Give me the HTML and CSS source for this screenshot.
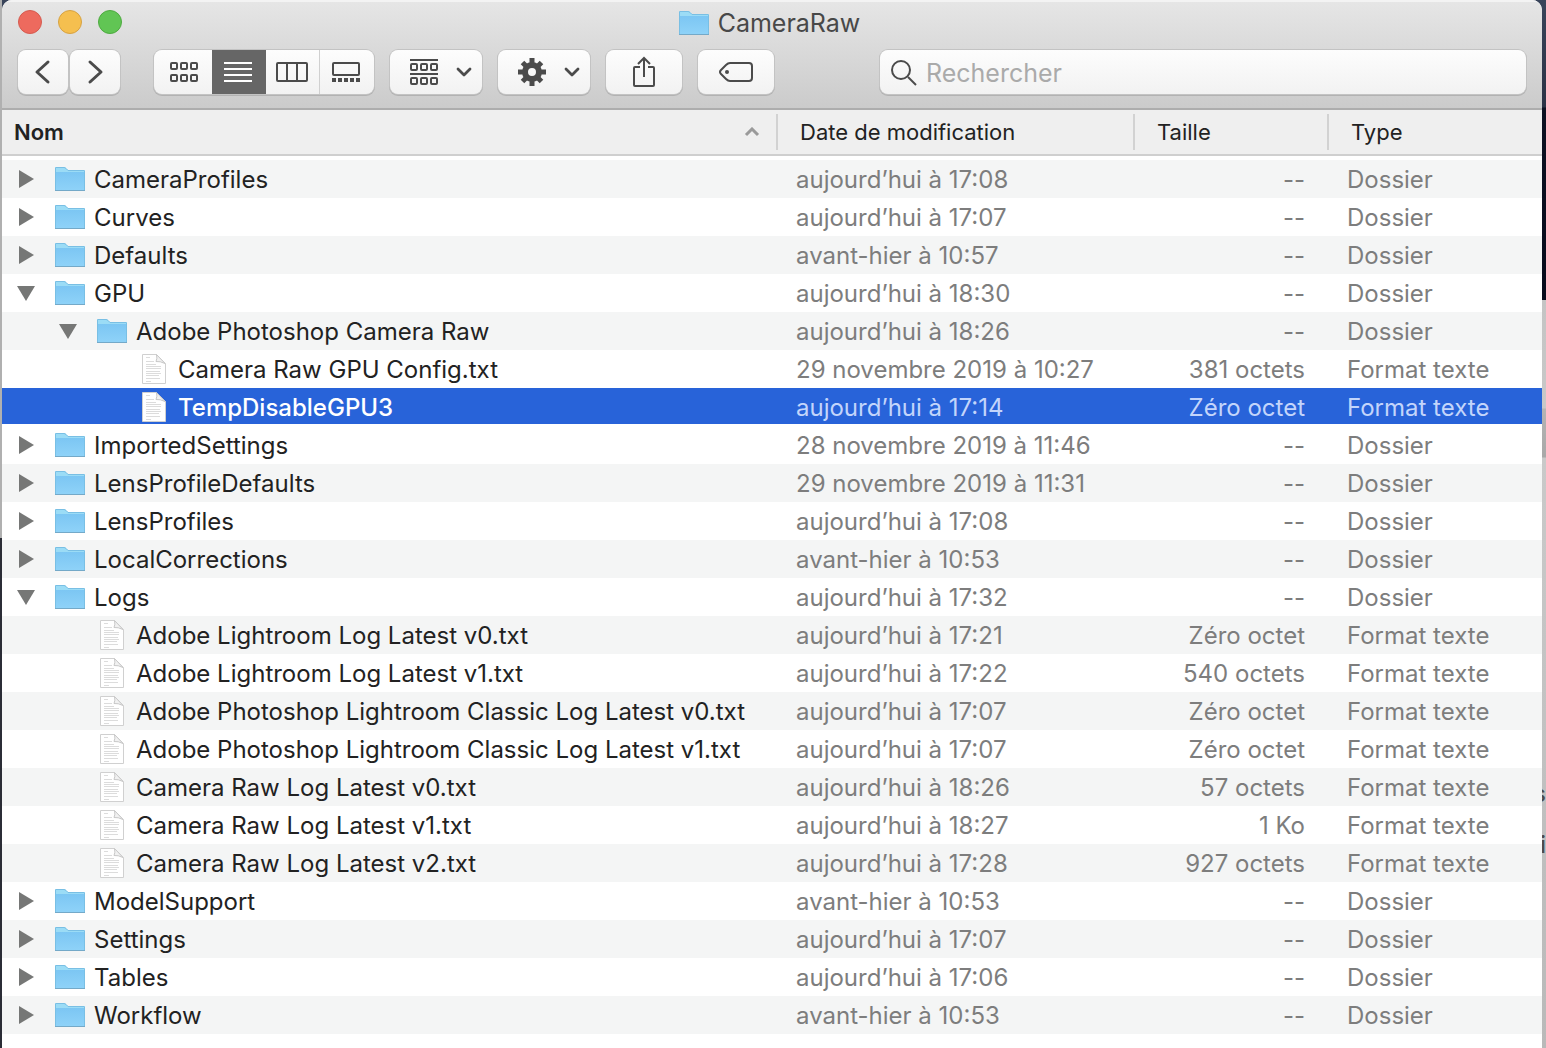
FILE: index.html
```html
<!DOCTYPE html>
<html lang="fr">
<head>
<meta charset="utf-8">
<title>CameraRaw</title>
<link rel="stylesheet" href="styles.css">
</head>
<body>
<svg class="sprite" aria-hidden="true">
  <defs>
    <linearGradient id="fill" x1="0" y1="0" x2="0" y2="1"><stop offset="0" stop-color="#7cc6f3"/><stop offset="1" stop-color="#8ed2f8"/></linearGradient>
    <symbol id="folder" viewBox="0 0 32 26">
      <path d="M1 24V2q0-1 1-1h8q1 0 2 1l2 2h16q1 0 1 1v19z" fill="#9bdcf6"/>
      <path d="M1 6h30v17q0 1-1 1H2q-1 0-1-1z" fill="url(#fill)"/>
      <path d="M1.500 24V2q0-.5.5-.5h8q1 0 2 1l2 2h16q.5 0 .5.500V24" fill="none" stroke="#79bfe4"/>
      <path d="M1 24.500h30" stroke="#74a9c8"/>
    </symbol>
    <symbol id="doc" viewBox="0 0 32 32">
      <path d="M4.500 1.500h14l9 9v20h-23z" fill="#fff" stroke="#d0d0d0"/>
      <path d="M18.500 1.500q1 4-.5 7 4-.5 9 2z" fill="#f1f1f1" stroke="#c8c8c8"/>
      <path d="M8 4.500h4M8 8.500h8M8 11.500h10M8 13.500h15M8 15.500h15M8 18.500h14M8 20.500h15M8 22.500h13M8 25.500h14M8 28.500h5" stroke="#dcdcdc"/>
    </symbol>
    <symbol id="tri" viewBox="0 0 20 20"><path d="M3 1v18l15-9z" fill="#767776"/></symbol>
    <symbol id="tri-open" viewBox="0 0 20 20"><path d="M1 3h18l-9 15z" fill="#767776"/></symbol>
    <symbol id="chev" viewBox="0 0 16 10"><path d="M2 2l6 6 6-6" fill="none" stroke="#4b4b4b" stroke-width="2.800" stroke-linecap="round" stroke-linejoin="round"/></symbol>
  </defs>
</svg>
<div class="behind" aria-hidden="true"><span class="peek peek-s">s</span><span class="peek peek-i">i</span></div>
<main class="window">
  <header class="chrome">
    <div class="titlebar">
      <div class="lights">
        <button class="light close" aria-label="Fermer"></button>
        <button class="light minimize" aria-label="Réduire"></button>
        <button class="light maximize" aria-label="Agrandir"></button>
      </div>
      <h1 class="title"><svg class="title-icon"><use href="#folder"/></svg>CameraRaw</h1>
    </div>
    <div class="toolbar">
      <div class="nav">
        <button class="btn" aria-label="Précédent"><svg width="50" height="44"><path d="M30 12 19 22 30 32" class="arrow"/></svg></button>
        <button class="btn" aria-label="Suivant"><svg width="50" height="44"><path d="M20 12 31 22 20 32" class="arrow"/></svg></button>
      </div>
      <div class="views">
        <button class="seg" aria-label="Icônes"><svg width="28" height="20" class="line"><rect x="1" y="1" width="6" height="6" rx="1"/><rect x="11" y="1" width="6" height="6" rx="1"/><rect x="21" y="1" width="6" height="6" rx="1"/><rect x="1" y="13" width="6" height="6" rx="1"/><rect x="11" y="13" width="6" height="6" rx="1"/><rect x="21" y="13" width="6" height="6" rx="1"/></svg></button>
        <button class="seg active" aria-label="Liste" aria-pressed="true"><svg width="28" height="20" class="line"><path d="M0 1h28M0 7h28M0 13h28M0 19h28"/></svg></button>
        <button class="seg" aria-label="Colonnes"><svg width="32" height="20" class="line"><rect x="1" y="1" width="30" height="18" rx="1"/><path d="M11 1v18M21 1v18"/></svg></button>
        <button class="seg divided" aria-label="Galerie"><svg width="28" height="20" class="line"><rect x="1" y="1" width="26" height="12" rx="1"/><path d="M0 18h28" stroke-width="4" stroke-dasharray="4 2"/></svg></button>
      </div>
      <button class="btn menu" aria-label="Grouper"><svg width="28" height="26" class="line"><path d="M0 1h28M0 15h28"/><rect x="1" y="5" width="6" height="6" rx="1"/><rect x="11" y="5" width="6" height="6" rx="1"/><rect x="21" y="5" width="6" height="6" rx="1"/><rect x="1" y="19" width="6" height="6" rx="1"/><rect x="11" y="19" width="6" height="6" rx="1"/><rect x="21" y="19" width="6" height="6" rx="1"/></svg><svg class="chev"><use href="#chev"/></svg></button>
      <button class="btn menu" aria-label="Actions"><svg width="28" height="28" viewBox="-14 -14 28 28"><circle r="7" fill="none" stroke="#4b4b4b" stroke-width="6"/><path d="M0-14V-9M0 14V9M-14 0H-9M14 0H9M-9.500-9.500-6-6M9.500 9.500 6 6M-9.500 9.500-6 6M9.500-9.500 6-6" stroke="#4b4b4b" stroke-width="5"/></svg><svg class="chev"><use href="#chev"/></svg></button>
      <button class="btn wide" aria-label="Partager"><svg width="24" height="32" class="line"><path d="M8 11H3q-1 0-1 1v17q0 1 1 1h18q1 0 1-1V12q0-1-1-1h-5M12 21V2M6 8l6-6 6 6"/></svg></button>
      <button class="btn wide" aria-label="Tags"><svg width="36" height="22" class="line"><path d="M12 2h19q3 0 3 3v12q0 3-3 3H12q-2 0-4-2l-5-5q-2-2 0-4l5-5q2-2 4-2z"/><circle cx="9" cy="11" r="2" fill="#4b4b4b" stroke="none"/></svg></button>
      <label class="search"><svg width="26" height="26" class="line"><circle cx="10" cy="10" r="9"/><path d="M17 17l8 8"/></svg><input type="search" placeholder="Rechercher" aria-label="Rechercher"></label>
    </div>
  </header>
  <table class="files">
    <colgroup><col><col class="c-date"><col class="c-size"><col class="c-type"></colgroup>
    <thead><tr><th class="sorted" aria-sort="ascending"><div class="sort">Nom<svg width="16" height="10"><path d="M2 8l6-6 6 6" fill="none" stroke="#9a9a9a" stroke-width="3"/></svg></div></th><th>Date de modification</th><th>Taille</th><th>Type</th></tr></thead>
    <tbody id="rows"></tbody>
  </table>
</main>
<script src="files.js"></script>
</body>
</html>
```
FILE: styles.css
```css
* { box-sizing: border-box; }
body {
  margin: 0;
  padding: 0 4px 0 2px;
  min-height: 100vh;
  overflow: hidden;
  font-family: Inter, "Liberation Sans", sans-serif;
  font-size: 24px;
  color: #222;
  background:
    linear-gradient(#b0b0b0 0 538px, #2b2d36 538px) left / 2px 100% no-repeat,
    linear-gradient(#39445a 0, #2b3245 107px, #0d1122 108px, #070b1c 300px, #c4c4c4 300px, #c8c8c8 408px, #b4b4b4 409px, #a8a8a8 457px, #c9c9c9 458px, #b9b9b9) right / 100% 100% no-repeat;
}
button { padding: 0; border: 0; background: none; font: inherit; }
.sprite { position: absolute; width: 0; height: 0; }
.behind { position: absolute; inset: 0; overflow: hidden; color: #4b4b4b; font-weight: 500; }
.peek { position: absolute; right: 0; line-height: 32px; }
.peek-s { top: 778px; }
.peek-i { top: 829px; }
.window {
  position: relative;
  min-height: 100vh;
  background: #fff;
  border-radius: 10px 10px 0 0;
  overflow: hidden;
}
.chrome {
  height: 110px;
  padding: 0 16px;
  background: linear-gradient(#e6e6e6, #cbcbcb);
  border-bottom: 2px solid #adadad;
  box-shadow: inset 0 2px #f3f3f3;
}
.titlebar { display: grid; grid-template-columns: 1fr auto 1fr; align-items: center; height: 44px; margin-bottom: 6px; }
.lights { display: flex; gap: 16px; }
.light { width: 24px; height: 24px; border-radius: 50%; border: 1px solid; }
.close { background: #ed6a5e; border-color: #d45b50; }
.minimize { background: #f5bf4f; border-color: #d6a243; }
.maximize { background: #61c554; border-color: #4eaa40; }
.title { display: flex; align-items: center; gap: 8px; margin: 0; padding: 2px 6px 0 0; font-size: 25px; font-weight: 400; line-height: 32px; color: #484848; }
.title-icon { width: 32px; height: 26px; }
.toolbar { display: flex; gap: 16px; height: 44px; }
.nav { display: flex; gap: 2px; margin-right: 18px; }
.btn, .views, .search {
  display: flex;
  align-items: center;
  justify-content: center;
  height: 44px;
  border-radius: 8px;
  background: linear-gradient(#fdfdfd, #f2f2f2);
  box-shadow: 0 0 0 1px #c3c3c3, 0 1px 0 1px #b2b2b2;
}
.nav .btn { width: 50px; }
.menu { width: 92px; gap: 18px; padding-left: 10px; }
.wide { width: 76px; }
.chev { width: 16px; height: 10px; }
.arrow { fill: none; stroke: #4b4b4b; stroke-width: 3; stroke-linecap: round; stroke-linejoin: round; }
.line { fill: none; stroke: #4b4b4b; stroke-width: 2; }
.views { width: 220px; overflow: hidden; }
.seg { display: flex; align-items: center; justify-content: center; flex: 1 0 0; height: 44px; }
.seg:first-child { flex: 0 0 58px; padding-left: 2px; }
.active { background: #666; }
.active .line { stroke: #fff; }
.seg:nth-child(n+2) { padding-right: 2px; }
.divided { border-left: 1px solid #d0d0d0; }
.search { flex: 1; justify-content: flex-start; gap: 9px; margin-left: 90px; padding: 2px 0 0 11px; }
.search input { flex: 1; min-width: 0; padding: 0; border: 0; outline: 0; background: none; font: inherit; font-size: 25px; }
.search input::placeholder { color: #aaa; }
.files { width: 100%; table-layout: fixed; border-spacing: 0; }
.c-date { width: 357px; }
.c-size { width: 194px; }
.c-type { width: 215px; }
th {
  height: 46px;
  padding: 0 0 0 24px;
  border-bottom: 2px solid #cfcfcf;
  background: linear-gradient(#d2d2d2, #d2d2d2) left center / 2px 36px no-repeat #efefef;
  font-size: 22px;
  font-weight: 400;
  text-align: left;
}
.sorted { padding: 0 16px 0 12px; background: #efefef; font-weight: 600; }
.sort { display: flex; align-items: center; justify-content: space-between; }
tbody::before { content: ""; display: block; height: 4px; }
td { height: 38px; padding: 2px 0 0 20px; color: #7d7d7d; white-space: nowrap; line-height: 30px; }
tbody tr:nth-child(odd) td { background: #f4f5f5; }
td:nth-child(3) { padding-right: 22px; text-align: right; }
td:first-child { padding-left: 14px; color: #222; }
.name { display: flex; align-items: center; height: 36px; }
.depth-1 { padding-left: 42px; }
.depth-2 { padding-left: 84px; }
.toggle { display: flex; width: 20px; height: 20px; margin: 0 18px 2px 0; }
.toggle svg { width: 20px; height: 20px; }
.icon { flex: none; width: 32px; height: 26px; margin: 0 8px 2px 0; }
.icon.doc { height: 32px; }
tbody tr.selected td { background: linear-gradient(#2863d9, #2863d9) top / 100% 36px no-repeat #fff; color: #c3d5fb; }
tbody tr.selected td:first-child { color: #fff; font-weight: 500; }
```
FILE: files.js
```js
const D = "Dossier", T = "Format texte", Z = "Zéro octet";
// depth, name, state (c = closed folder, o = open folder, f = file), date, size
const items = [
  [0, "CameraProfiles", "c", "aujourd’hui à 17:08"],
  [0, "Curves", "c", "aujourd’hui à 17:07"],
  [0, "Defaults", "c", "avant-hier à 10:57"],
  [0, "GPU", "o", "aujourd’hui à 18:30"],
  [1, "Adobe Photoshop Camera Raw", "o", "aujourd’hui à 18:26"],
  [2, "Camera Raw GPU Config.txt", "f", "29 novembre 2019 à 10:27", "381 octets"],
  [2, "TempDisableGPU3", "f", "aujourd’hui à 17:14", Z, true],
  [0, "ImportedSettings", "c", "28 novembre 2019 à 11:46"],
  [0, "LensProfileDefaults", "c", "29 novembre 2019 à 11:31"],
  [0, "LensProfiles", "c", "aujourd’hui à 17:08"],
  [0, "LocalCorrections", "c", "avant-hier à 10:53"],
  [0, "Logs", "o", "aujourd’hui à 17:32"],
  [1, "Adobe Lightroom Log Latest v0.txt", "f", "aujourd’hui à 17:21", Z],
  [1, "Adobe Lightroom Log Latest v1.txt", "f", "aujourd’hui à 17:22", "540 octets"],
  [1, "Adobe Photoshop Lightroom Classic Log Latest v0.txt", "f", "aujourd’hui à 17:07", Z],
  [1, "Adobe Photoshop Lightroom Classic Log Latest v1.txt", "f", "aujourd’hui à 17:07", Z],
  [1, "Camera Raw Log Latest v0.txt", "f", "aujourd’hui à 18:26", "57 octets"],
  [1, "Camera Raw Log Latest v1.txt", "f", "aujourd’hui à 18:27", "1 Ko"],
  [1, "Camera Raw Log Latest v2.txt", "f", "aujourd’hui à 17:28", "927 octets"],
  [0, "ModelSupport", "c", "avant-hier à 10:53"],
  [0, "Settings", "c", "aujourd’hui à 17:07"],
  [0, "Tables", "c", "aujourd’hui à 17:06"],
  [0, "Workflow", "c", "avant-hier à 10:53"]
];
document.getElementById("rows").innerHTML = items.map(([depth, name, state, date, size = "--", selected]) => {
  const file = state === "f";
  const toggle = file
    ? '<span class="toggle"></span>'
    : `<button class="toggle" aria-label="${name}" aria-expanded="${state === "o"}"><svg><use href="#${state === "o" ? "tri-open" : "tri"}"/></svg></button>`;
  const icon = `<svg class="icon ${file ? "doc" : ""}"><use href="#${file ? "doc" : "folder"}"/></svg>`;
  return `<tr class="${selected ? "selected" : ""}"><td><div class="name depth-${depth}">${toggle}${icon}${name}</div></td><td>${date}</td><td>${size}</td><td>${file ? T : D}</td></tr>`;
}).join("");
```
